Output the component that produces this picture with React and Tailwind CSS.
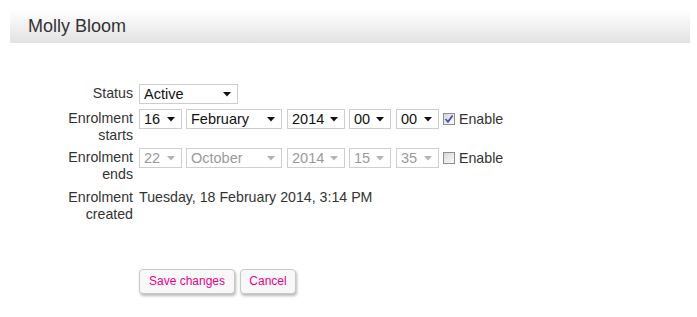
import React from "react";

function Arrow({ disabled }) {
  return (
    <svg width="8" height="5" viewBox="0 0 8 5" className="ml-auto mr-[6px] shrink-0">
      <path d="M0 0 L8 0 L4 4.5 Z" fill={disabled ? "#b3b3b3" : "#111"} />
    </svg>
  );
}

function Sel({ value, className, disabled }) {
  return (
    <div
      className={
        "flex items-center h-[20px] border bg-white pl-[4px] text-[14.5px] leading-[18px] " +
        (disabled ? "border-[#cfcfcf] text-[#9a9a9a] " : "border-[#cdcdcd] text-[#111] ") +
        className
      }
    >
      <span>{value}</span>
      <Arrow disabled={disabled} />
    </div>
  );
}

function Check({ checked }) {
  return (
    <div className="w-[12px] h-[12px] border border-[#8f8f8f] bg-linear-to-br from-[#d8d8d8] to-[#fbfbfb] flex items-center justify-center">
      {checked && (
        <svg width="10" height="10" viewBox="0 0 10 10">
          <path d="M1.5 5 L4 7.8 L8.6 1.5" fill="none" stroke="#3f56a6" strokeWidth="1.8" />
        </svg>
      )}
    </div>
  );
}

function DateRow({ vals, disabled, checked }) {
  return (
    <div className="flex items-center">
      <Sel value={vals[0]} disabled={disabled} className="w-[43px]" />
      <Sel value={vals[1]} disabled={disabled} className="w-[96px] ml-[4px]" />
      <Sel value={vals[2]} disabled={disabled} className="w-[58px] ml-[5px]" />
      <Sel value={vals[3]} disabled={disabled} className="w-[42px] ml-[4px]" />
      <Sel value={vals[4]} disabled={disabled} className="w-[43px] ml-[5px]" />
      <div className="ml-[4px]">
        <Check checked={checked} />
      </div>
      <span className="ml-[4px] text-[14.2px] text-[#333]">Enable</span>
    </div>
  );
}

export default function App() {
  return (
    <div
      className="w-[697px] h-[317px] bg-white text-[#333] overflow-hidden"
      style={{ fontFamily: '"Liberation Sans", Arial, sans-serif' }}
    >
      <div className="pt-[10px] pl-[10px]">
        <div className="w-[680px] h-[33px] bg-linear-to-b from-white to-[#e2e2e2] pl-[18px] text-[18px] leading-[33px] text-[#333]">
          Molly Bloom
        </div>
      </div>

      <div className="mt-[41px] flex flex-col text-[14.2px] leading-[17px]">
        <div className="flex items-start">
          <div className="w-[133px] text-right pt-[1px]">Status</div>
          <div className="ml-[6px]">
            <Sel value="Active" className="w-[99px]" />
          </div>
        </div>

        <div className="flex items-start mt-[5px]">
          <div className="w-[133px] text-right pt-[1px]">
            Enrolment
            <br />
            starts
          </div>
          <div className="ml-[6px]">
            <DateRow vals={["16", "February", "2014", "00", "00"]} checked />
          </div>
        </div>

        <div className="flex items-start mt-[4px]">
          <div className="w-[133px] text-right pt-[1px]">
            Enrolment
            <br />
            ends
          </div>
          <div className="ml-[6px]">
            <DateRow vals={["22", "October", "2014", "15", "35"]} disabled />
          </div>
        </div>

        <div className="flex items-start mt-[6px]">
          <div className="w-[133px] text-right">
            Enrolment
            <br />
            created
          </div>
          <div className="ml-[6px]">Tuesday, 18 February 2014, 3:14 PM</div>
        </div>

        <div className="flex mt-[46px] ml-[139px] gap-[5px]">
          <button className="w-[96px] h-[25px] border border-[#c9c9c9] rounded-[4px] bg-[#f8f8f8] shadow-[1px_2px_3px_rgba(0,0,0,0.28)] text-[12px] text-[#e8008a]">
            Save changes
          </button>
          <button className="w-[56px] h-[25px] border border-[#c9c9c9] rounded-[4px] bg-[#f8f8f8] shadow-[1px_2px_3px_rgba(0,0,0,0.28)] text-[12px] text-[#e8008a]">
            Cancel
          </button>
        </div>
      </div>
    </div>
  );
}
